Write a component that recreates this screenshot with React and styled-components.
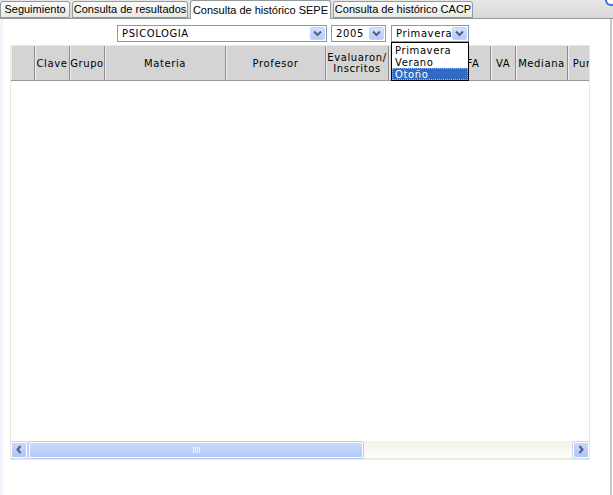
import React from 'react';
import styled, { createGlobalStyle } from 'styled-components';

const GlobalStyle = createGlobalStyle`
	html, body {
		margin: 0;
		padding: 0;
		background: #fff;
	}
`;

const tabs = [
	{ id: 1, label: 'Seguimiento', width: 70 },
	{ id: 2, label: 'Consulta de resultados', width: 116 },
	{ id: 3, label: 'Consulta de histórico SEPE', width: 141, active: true },
	{ id: 4, label: 'Consulta de histórico CACP', width: 140 },
];

// the column under the open list stays blank, as in the capture
const columns = [
	{ id: 'sel', label: '', width: 24 },
	{ id: 'clave', label: 'Clave', width: 35 },
	{ id: 'grupo', label: 'Grupo', width: 35 },
	{ id: 'materia', label: 'Materia', width: 121 },
	{ id: 'profesor', label: 'Profesor', width: 100 },
	{ id: 'eval', label: 'Evaluaron/ Inscritos', width: 63 },
	{ id: 'hidden', label: '', width: 67 },
	{ id: 'fa', label: 'FA', width: 35 },
	{ id: 'va', label: 'VA', width: 25 },
	{ id: 'mediana', label: 'Mediana', width: 52 },
	{ id: 'pun', label: 'Puntaje', width: 52 },
];

const periodos = ['Primavera', 'Verano', 'Otoño'];

function Arrow() {
	return (
		<svg width="9" height="7" viewBox="0 0 9 7">
			<path d="M1 1.5 L4.5 5 L8 1.5" fill="none" stroke="#4d6185" strokeWidth="2" />
		</svg>
	);
}

function Select({ value, width }) {
	return (
		<SelectBox $width={width}>
			<SelectText>{value}</SelectText>
			<SelectButton>
				<Arrow />
			</SelectButton>
		</SelectBox>
	);
}

function ScrollArrow({ dir }) {
	return (
		<ScrollButton>
			<svg width="6" height="9" viewBox="0 0 6 9">
				{dir === 'left' ? (
					<path d="M4.5 1 L1.5 4.5 L4.5 8" fill="none" stroke="#4d6185" strokeWidth="2" />
				) : (
					<path d="M1.5 1 L4.5 4.5 L1.5 8" fill="none" stroke="#4d6185" strokeWidth="2" />
				)}
			</svg>
		</ScrollButton>
	);
}

export default function App() {
	return (
		<>
			<GlobalStyle />
			<Page>
				<TabBar>
					{tabs.map(t => (
						<Tab key={t.id} $width={t.width} $active={t.active}>
							{t.label}
						</Tab>
					))}
					<Corner />
				</TabBar>
				<Frame>
					<LeftStrip />
					<Content>
						<Filters>
							<Select value="PSICOLOGIA" width={210} />
							<Select value="2005" width={55} />
							<PeriodoWrap>
								<Select value="Primavera" width={78} />
								<DropList>
									{periodos.map(p => (
										<Option key={p} $selected={p === 'Otoño'}>
											{p}
										</Option>
									))}
								</DropList>
							</PeriodoWrap>
						</Filters>
						<Grid>
							<HeaderRow>
								{columns.map(c => (
									<HeaderCell key={c.id} $width={c.width}>
										{c.label}
									</HeaderCell>
								))}
							</HeaderRow>
							<GridBody />
							<HScroll>
								<ScrollArrow dir="left" />
								<Track>
									<Thumb>
										<Grip />
									</Thumb>
								</Track>
								<ScrollArrow dir="right" />
							</HScroll>
						</Grid>
					</Content>
					<RightEdge />
				</Frame>
			</Page>
		</>
	);
}

const Page = styled.div`
	width: 613px;
	height: 495px;
	display: flex;
	flex-direction: column;
	background: #fff;
	overflow: hidden;
	font-family: 'DejaVu Sans', Verdana, sans-serif;
`;

const TabBar = styled.div`
	position: relative;
	height: 18px;
	display: flex;
	align-items: flex-end;
	gap: 2px;
	background: linear-gradient(#e6e6e6, #d9d9d9);
	border-bottom: 1px solid #919b9c;
	padding-right: 8px;
`;

const Tab = styled.div`
	width: ${p => p.$width}px;
	height: ${p => (p.$active ? 19 : 17)}px;
	margin-bottom: ${p => (p.$active ? -1 : 0)}px;
	box-sizing: border-box;
	border: 1px solid #919b9c;
	border-bottom: ${p => (p.$active ? 'none' : '1px solid #919b9c')};
	border-radius: 3px 3px 0 0;
	background: ${p => (p.$active ? '#fff' : 'linear-gradient(#fbfbfb, #e9e9e4)')};
	font-family: 'Liberation Sans', Arial, sans-serif;
	font-size: 11px;
	color: #000;
	display: flex;
	align-items: center;
	justify-content: center;
	white-space: nowrap;
	padding-bottom: 1px;
`;

const Corner = styled.div`
	position: absolute;
	right: -4px;
	top: -6px;
	width: 12px;
	height: 12px;
	border-radius: 50%;
	border: 2px solid #3b6fd6;
	background: #fff;
	box-sizing: border-box;
`;

const Frame = styled.div`
	flex: 1;
	display: flex;
`;

const LeftStrip = styled.div`
	width: 3px;
	background: #f4f6fd;
`;

const Content = styled.div`
	flex: 1;
	padding: 6px 0 0 7px;
	display: flex;
	flex-direction: column;
`;

const RightEdge = styled.div`
	width: 2px;
	margin-right: 1px;
	background: #c3c7d3;
`;

const Filters = styled.div`
	display: flex;
	gap: 4px;
	margin-left: 107px;
	height: 17px;
	position: relative;
	z-index: 2;
`;

const SelectBox = styled.div`
	width: ${p => p.$width}px;
	height: 17px;
	box-sizing: border-box;
	border: 1px solid #7f9db9;
	background: #fff;
	display: flex;
	align-items: center;
`;

const SelectText = styled.span`
	flex: 1;
	padding-left: 4px;
	font-size: 10px;
	letter-spacing: 0.6px;
	color: #000;
	white-space: nowrap;
	overflow: hidden;
`;

const SelectButton = styled.div`
	width: 15px;
	height: 13px;
	margin-right: 1px;
	border-radius: 2px;
	background: linear-gradient(#d5e1fd, #b6cbf8);
	border: 1px solid #c3d3fd;
	box-sizing: border-box;
	display: flex;
	align-items: center;
	justify-content: center;
`;

const PeriodoWrap = styled.div`
	position: relative;
	margin-left: 1px;
`;

const DropList = styled.div`
	position: absolute;
	left: 0;
	top: 17px;
	width: 78px;
	box-sizing: border-box;
	border: 1px solid #000;
	background: #fff;
	padding: 1px 0 0;
`;

const Option = styled.div`
	height: 12px;
	line-height: 11px;
	box-sizing: border-box;
	padding-left: 2px;
	font-size: 10px;
	letter-spacing: 0.6px;
	color: ${p => (p.$selected ? '#fff' : '#000')};
	background: ${p => (p.$selected ? '#316ac5' : 'transparent')};
	border: 1px dotted ${p => (p.$selected ? '#f0b040' : 'transparent')};
`;

const Grid = styled.div`
	margin-top: 3px;
	width: 580px;
	height: 415px;
	box-sizing: border-box;
	border: 1px solid #ece9d8;
	display: flex;
	flex-direction: column;
	overflow: hidden;
`;

const HeaderRow = styled.div`
	height: 34px;
	display: flex;
	background: #d4d4d4;
	border-bottom: 1px solid #9a9a9a;
	overflow: hidden;
`;

const HeaderCell = styled.div`
	flex: 0 0 ${p => p.$width}px;
	box-sizing: border-box;
	border-right: 1px solid #8c8c8c;
	box-shadow: inset 1px 0 #eeeeee;
	display: flex;
	align-items: center;
	justify-content: center;
	text-align: center;
	font-size: 10px;
	letter-spacing: 0.6px;
	line-height: 11px;
	color: #000;
	padding: 0 1px;
	white-space: pre-line;
	overflow: hidden;
`;

const GridBody = styled.div`
	flex: 1;
	background: #fff;
`;

const HScroll = styled.div`
	height: 17px;
	display: flex;
	align-items: center;
	gap: 2px;
	background: linear-gradient(#f3f1ea, #fdfdfa);
	border-bottom: 1px solid #ece9d8;
`;

const ScrollButton = styled.div`
	width: 16px;
	height: 16px;
	box-sizing: border-box;
	border: 1px solid #fff;
	border-radius: 2px;
	background: linear-gradient(#c8d7fc, #b1c6f6);
	display: flex;
	align-items: center;
	justify-content: center;
	box-shadow: 0 0 0 1px #cbd6ef;
`;

const Track = styled.div`
	flex: 1;
	height: 16px;
	display: flex;
`;

const Thumb = styled.div`
	width: 334px;
	box-sizing: border-box;
	border: 1px solid #fff;
	border-radius: 2px;
	box-shadow: 0 0 0 1px #b9c9ee;
	background: linear-gradient(#c9d9fc, #b4cbf8);
	display: flex;
	align-items: center;
	justify-content: center;
`;

const Grip = styled.div`
	width: 7px;
	height: 6px;
	background: repeating-linear-gradient(90deg, #eef3ff 0 1px, transparent 1px 2px);
`;
